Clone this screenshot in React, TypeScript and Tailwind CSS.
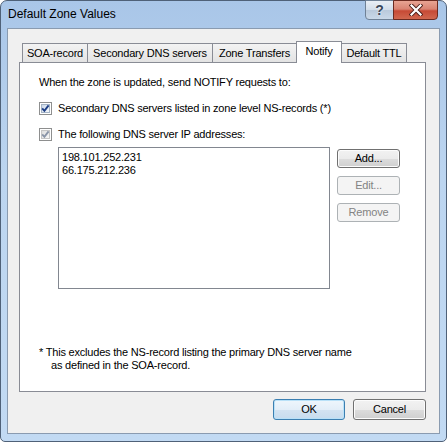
import React from "react";

const btnBase =
  "flex items-center justify-center rounded-[3px] border text-[11px] tracking-[-0.2px]";
const btnNormal =
  "border-[#707070] text-black bg-[linear-gradient(to_bottom,#f2f2f2_0%,#ebebeb_50%,#dddddd_51%,#cfcfcf_100%)] shadow-[inset_0_0_0_1px_#fcfcfc]";
const btnDisabled = "border-[#adb2b5] bg-[#f4f4f4] text-[#838383]";

function Tab({ label, width, selected }: { label: string; width: string; selected?: boolean }) {
  if (selected) {
    return (
      <div
        className={`relative z-10 -mb-px -ml-px flex h-[22px] items-start justify-center border border-b-0 border-[#898c95] bg-white pt-[3px] ${width}`}
      >
        {label}
      </div>
    );
  }
  return (
    <div
      className={`-ml-px flex h-[19px] items-center justify-center border border-b-0 border-[#898c95] bg-[linear-gradient(to_bottom,#f3f3f3,#e3e3e3)] first:ml-0 ${width}`}
    >
      {label}
    </div>
  );
}

function CheckBox({ dim }: { dim?: boolean }) {
  return (
    <div className="relative h-[13px] w-[13px] shrink-0 border border-[#8e8f8f] bg-white p-px">
      <div
        className={`h-full w-full border ${
          dim
            ? "border-[#c6c6c6] bg-[linear-gradient(135deg,#dedede,#f7f7f7)]"
            : "border-[#a5b4c6] bg-[linear-gradient(135deg,#cbd8e8,#f6f9fc)]"
        }`}
      />
      <svg className="absolute left-0 top-0" width="11" height="11" viewBox="0 0 11 11">
        <path
          d="M2.2 5.4 L4.4 7.8 L8.6 2.4"
          fill="none"
          stroke={dim ? "#8a95a8" : "#1c3d85"}
          strokeWidth="1.9"
        />
      </svg>
    </div>
  );
}

export default function App() {
  return (
    <div className="h-[442px] w-[447px] overflow-hidden bg-white text-black [font-family:'Liberation_Sans',Arial,sans-serif]">
      <div className="flex h-full w-full flex-col rounded-t-[7px] rounded-b-[5px] border border-[#4f6178] bg-[linear-gradient(to_bottom,#a9c6e8_0%,#bcd5f0_40%,#c2daf3_100%)] px-[6px] pb-[7px]">
        {/* Title bar */}
        <div className="flex h-[27px] items-start justify-between">
          <span className="pl-px pt-[6px] text-[12px] leading-[15px]">Default Zone Values</span>
          <div className="-mt-px mr-[2px] flex">
            <div className="flex h-[20px] w-[29px] items-center justify-center rounded-bl-[4px] border border-[#6f8196] bg-[linear-gradient(to_bottom,#e9eff6_0%,#d2dde9_50%,#b9c9db_51%,#c9d8e8_100%)] text-[14px] font-bold leading-none text-[#39485a] [text-shadow:0_0_2px_#fff]">
              ?
            </div>
            <div className="-ml-px flex h-[20px] w-[45px] items-center justify-center rounded-br-[4px] border border-[#6b2a20] bg-[linear-gradient(to_bottom,#e8a493_0%,#d98372_45%,#c64a35_55%,#d0674f_100%)]">
              <svg width="14" height="12" viewBox="0 0 14 12">
                <path d="M2.5 1.5 L11.5 10.5 M11.5 1.5 L2.5 10.5" stroke="#4a1e18" strokeWidth="4" strokeLinecap="square" />
                <path d="M2.5 1.5 L11.5 10.5 M11.5 1.5 L2.5 10.5" stroke="#ffffff" strokeWidth="2.2" strokeLinecap="square" />
              </svg>
            </div>
          </div>
        </div>

        {/* Client area */}
        <div className="flex flex-1 flex-col border border-[#8a9bb0] bg-[#f0f0f0] pb-[13px] pl-[11px] pr-[13px] pt-[12px] text-[11px] leading-[13px] tracking-[-0.2px]">
          {/* Tabs */}
          <div className="flex items-end pl-[3px]">
            <Tab label="SOA-record" width="w-[66px]" />
            <Tab label="Secondary DNS servers" width="w-[126px]" />
            <Tab label="Zone Transfers" width="w-[85px]" />
            <Tab label="Notify" width="w-[46px]" selected />
            <Tab label="Default TTL" width="w-[66px]" />
          </div>

          {/* Panel */}
          <div className="flex flex-1 flex-col border border-[#898c95] bg-white pl-[19px] pt-[13px]">
            <div>When the zone is updated, send NOTIFY requests to:</div>

            <div className="mt-[13px] flex items-center gap-[6px]">
              <CheckBox />
              <span>Secondary DNS servers listed in zone level NS-records (*)</span>
            </div>

            <div className="mt-[13px] flex items-center gap-[6px]">
              <CheckBox dim />
              <span>The following DNS server IP addresses:</span>
            </div>

            <div className="ml-[19px] mt-[6px] flex items-start gap-[7px]">
              <div className="h-[142px] w-[272px] border border-[#828790] bg-white pl-[3px] pt-[3px]">
                <div>198.101.252.231</div>
                <div>66.175.212.236</div>
              </div>
              <div className="mt-[2px] flex flex-col gap-[8px]">
                <div className={`${btnBase} ${btnNormal} h-[19px] w-[63px]`}>Add...</div>
                <div className={`${btnBase} ${btnDisabled} h-[19px] w-[63px]`}>Edit...</div>
                <div className={`${btnBase} ${btnDisabled} h-[19px] w-[63px]`}>Remove</div>
              </div>
            </div>

            <div className="mt-[57px]">* This excludes the NS-record listing the primary DNS server name</div>
            <div className="pl-[12px]">as defined in the SOA-record.</div>
          </div>

          {/* Dialog buttons */}
          <div className="mt-[7px] flex justify-end gap-[8px]">
            <div
              className={`${btnBase} h-[21px] w-[72px] border-[#3c7fb1] bg-[linear-gradient(to_bottom,#eef6fc_0%,#e3eef8_50%,#d3e3f2_51%,#c7dcee_100%)] shadow-[inset_0_0_0_1px_#b9e1f8]`}
            >
              OK
            </div>
            <div className={`${btnBase} ${btnNormal} h-[21px] w-[73px]`}>Cancel</div>
          </div>
        </div>
      </div>
    </div>
  );
}
